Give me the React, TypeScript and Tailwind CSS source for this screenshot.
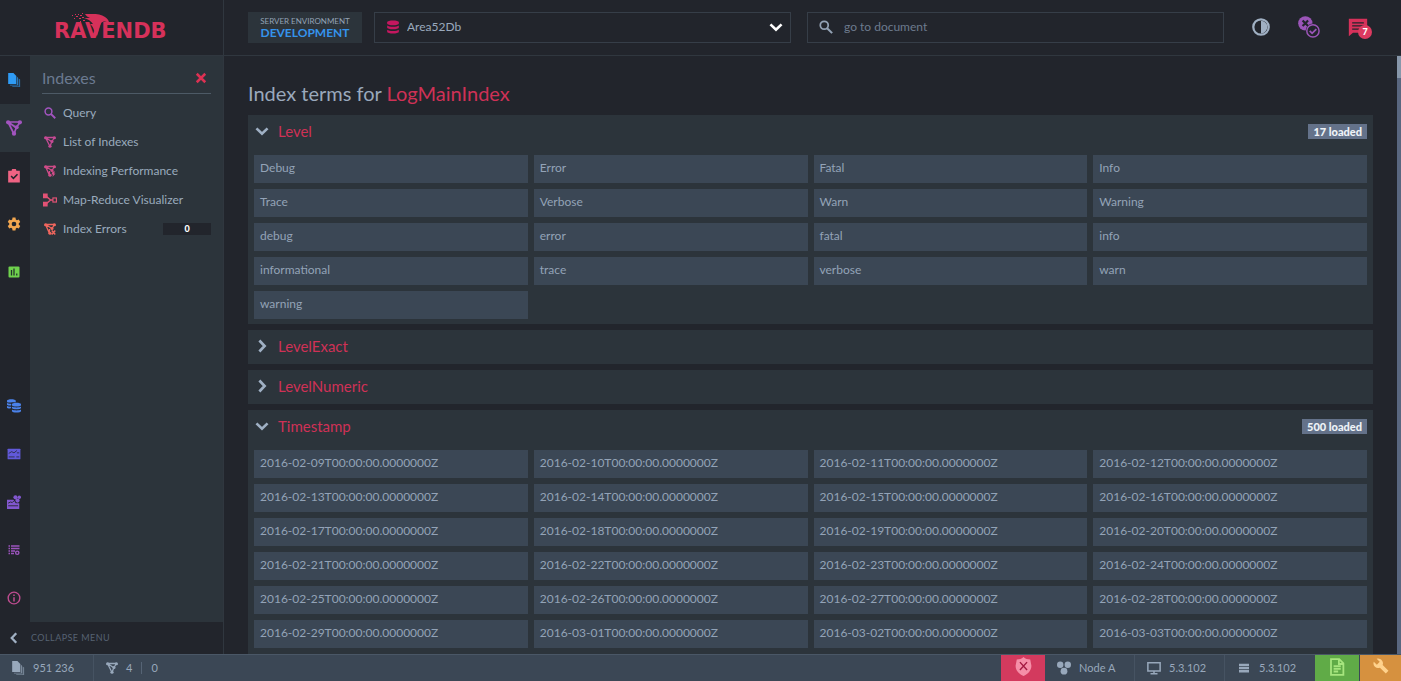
import { useState } from "react";
import type { ReactNode } from "react";

type IconProps = { className?: string };

function Svg({ className, box = 24, children }: IconProps & { box?: number; children: ReactNode }) {
  return (
    <svg viewBox={`0 0 ${box} ${box}`} className={className} fill="currentColor" aria-hidden="true">
      {children}
    </svg>
  );
}

function DocumentsIcon({ className }: IconProps) {
  return (
    <Svg className={className}>
      <path d="M2 0h9l5 5v14H2z" />
      <path d="M17 6.500 19 8v13.500H5V20h12z" opacity=".7" />
      <path d="M20 9.500 22.500 11v13H9v-1.500h11z" opacity=".6" />
    </Svg>
  );
}

function IndexIcon({ className, variant }: IconProps & { variant?: "plain" | "bolt" | "error" }) {
  return (
    <Svg className={className}>
      <path
        d={
          variant === "bolt" || variant === "error"
            ? "M3 3h18M3 3l8 18M3 3l13 8M21 3l-5 8M11 21v-9"
            : "M3 3h18M3 3l9 18M3 3l12.500 8.500L12 21M15.500 11.500 21 3"
        }
        fill="none"
        stroke="currentColor"
        strokeWidth="2.600"
      />
      <circle cx="3.200" cy="3.500" r="3.200" />
      <circle cx="20.800" cy="3.500" r="3.200" />
      <circle cx="16" cy="11" r="3" />
      <circle cx="12" cy="20.500" r="3.200" />
      {variant === "bolt" && <path d="M17 13h5l-2 4h3l-6 7 1-5h-3z" />}
      {variant === "error" && (
        <path d="m15.500 15 7 8m0-8-7 8" fill="none" stroke="currentColor" strokeWidth="3" />
      )}
    </Svg>
  );
}

function TasksIcon({ className }: IconProps) {
  return (
    <Svg className={className}>
      <path d="M2 3h6a4 4 0 0 1 8 0h6v20H2z" />
      <path d="m7 12 4 4 7-7" fill="none" stroke="#22252c" strokeWidth="2.600" />
    </Svg>
  );
}

function GearIcon({ className }: IconProps) {
  return (
    <Svg className={className}>
      <path
        fillRule="evenodd"
        d="M9.500 1h5l.6 3.200 2 1.200 3.100-1.100 2.500 4.300-2.500 2.200v2.400l2.500 2.200-2.500 4.300-3.100-1.100-2 1.200-.6 3.200h-5l-.6-3.200-2-1.200-3.100 1.100-2.500-4.300 2.500-2.200v-2.400L1.300 8.600l2.500-4.300 3.100 1.100 2-1.200zM12 8a4 4 0 1 0 0 8 4 4 0 0 0 0-8z"
      />
    </Svg>
  );
}

function StatsIcon({ className }: IconProps) {
  return (
    <Svg className={className}>
      <rect x="1" y="1" width="22" height="22" rx="2" />
      <path d="M7 8v11M12 5v14M17.500 15v4" stroke="#22352c" strokeWidth="2.600" />
    </Svg>
  );
}

function DatabaseIcon({ className }: IconProps) {
  return (
    <Svg className={className}>
      <path d="M2 4c0-4 20-4 20 0v2c0 4-20 4-20 0z" />
      <path d="M2 9.500c3 3 17 3 20 0V13c0 4-20 4-20 0z" />
      <path d="M2 16.500c3 3 17 3 20 0V20c0 4-20 4-20 0z" />
    </Svg>
  );
}

function DatabasesIcon({ className }: IconProps) {
  return (
    <Svg className={className}>
      <path d="M0 3c0-3.500 15-3.500 15 0v2.500H9C6 6 1 7 0 4.500z" />
      <path d="M0 7c2 1.500 5 1.500 7 1.200V11c-3 .6-7 0-7-1.500zM0 12c2 1.500 5 1.500 7 1.200V16c-3 .6-7 0-7-1.500z" />
      <path d="M8.500 9c0-3.500 15.500-3.500 15.500 0v1.500c0 3-15.500 3-15.500 0z" />
      <path d="M8.500 13c3 2 12.500 2 15.500 0v2.500c0 3-15.500 3-15.500 0zM8.500 18c3 2 12.500 2 15.500 0v2.500c0 3.500-15.500 3.500-15.500 0z" />
    </Svg>
  );
}

function DashboardIcon({ className }: IconProps) {
  return (
    <Svg className={className}>
      <rect x="1" y="3" width="22" height="18" rx="1" />
      <path d="m3 11 5-3 4 2 5-4M3 17h10M16 17h5M17 10h4" fill="none" stroke="#22252c" strokeWidth="1.300" />
    </Svg>
  );
}

function ClusterDashboardIcon({ className }: IconProps) {
  return (
    <Svg className={className}>
      <path d="M0 8h11l4 6h6v10H0z" />
      <circle cx="14.500" cy="4" r="3.500" />
      <circle cx="21" cy="4" r="3" />
      <circle cx="18" cy="9.500" r="3.600" />
      <path d="m2 14 4-2 3 1 3-3M2 18.500h17" fill="none" stroke="#22252c" strokeWidth="1.500" />
    </Svg>
  );
}

function LogsIcon({ className }: IconProps) {
  return (
    <Svg className={className}>
      <path
        d="M1 4h3M6 4h17M1 9h3M6 9h17M1 14h3M6 14h8M1 19h3M6 19h6"
        fill="none"
        stroke="currentColor"
        strokeWidth="3"
      />
      <circle cx="18.500" cy="17.500" r="3.300" fill="none" stroke="currentColor" strokeWidth="2.800" />
    </Svg>
  );
}

function AboutIcon({ className }: IconProps) {
  return (
    <Svg className={className}>
      <circle cx="12" cy="12" r="10" fill="none" stroke="currentColor" strokeWidth="2.400" />
      <path d="M10.700 10.500h2.600V18h-2.600zM10.700 6h2.600v2.600h-2.600z" />
    </Svg>
  );
}

function SearchIcon({ className }: IconProps) {
  return (
    <Svg className={className}>
      <circle cx="9" cy="9" r="6.800" fill="none" stroke="currentColor" strokeWidth="3" />
      <path d="m14 14 8.500 8.500" stroke="currentColor" strokeWidth="3.600" />
    </Svg>
  );
}

function MapReduceIcon({ className }: IconProps) {
  return (
    <Svg className={className}>
      <path d="M0 1h8v8H0zM0 15h8v8H0z" />
      <path d="m6 6 7 6-7 6M13 12h4" fill="none" stroke="currentColor" strokeWidth="2.400" />
      <rect x="17" y="8.500" width="6" height="7" fill="none" stroke="currentColor" strokeWidth="2" />
    </Svg>
  );
}

function CloseIcon({ className }: IconProps) {
  return (
    <Svg className={className}>
      <path d="m3.500 3.500 17 17m0-17-17 17" stroke="currentColor" strokeWidth="5" />
    </Svg>
  );
}

function ChevronIcon({ className }: IconProps) {
  return (
    <Svg className={className}>
      <path d="m2.500 7.500 9.500 9 9.500-9" fill="none" stroke="currentColor" strokeWidth="4.600" />
    </Svg>
  );
}

function ContrastIcon({ className }: IconProps) {
  return (
    <Svg className={className}>
      <circle cx="12" cy="12" r="10.300" fill="none" stroke="currentColor" strokeWidth="3" />
      <path d="M12 3.500a8.500 8.500 0 0 1 0 17z" />
    </Svg>
  );
}

function ClientsIcon({ className }: IconProps) {
  return (
    <Svg className={className}>
      <circle cx="8" cy="8" r="7.800" />
      <path d="m5 5 6 6m0-6-6 6" stroke="#22252c" strokeWidth="2.400" />
      <circle cx="16.300" cy="16.300" r="8" fill="#22252c" />
      <circle cx="16.300" cy="16.300" r="6.700" fill="none" stroke="currentColor" strokeWidth="1.600" />
      <path d="m12.800 16.300 2.600 2.600 4.600-4.600" fill="none" stroke="currentColor" strokeWidth="2" />
    </Svg>
  );
}

function MessageIcon({ className }: IconProps) {
  return (
    <Svg className={className}>
      <path d="M1 2h22v17H6l-5 4z" />
      <path d="M5 7h14M5 10.700h14M5 14.400h10" stroke="#22252c" strokeWidth="1.500" />
    </Svg>
  );
}

function ShieldIcon({ className }: IconProps) {
  return (
    <Svg className={className}>
      <path d="M12 0c2.500 2.500 5 3 8.500 3L22 11c0 6-4.500 10.500-10 13C6.500 21.500 2 17 2 11l1.500-8C7 3 9.500 2.500 12 0z" />
      <path d="m7.500 6.500 9 10m0-10-9 10" stroke="#a31b42" strokeWidth="1.800" />
    </Svg>
  );
}

function NodeIcon({ className }: IconProps) {
  return (
    <Svg className={className}>
      <circle cx="5.500" cy="6.500" r="5.500" />
      <circle cx="18.500" cy="6.500" r="5.500" />
      <circle cx="12" cy="17.500" r="5.800" />
    </Svg>
  );
}

function ClientIcon({ className }: IconProps) {
  return (
    <Svg className={className}>
      <path d="M1.500 3h21v14h-21zM12 17v5M6 22h12" fill="none" stroke="currentColor" strokeWidth="2.600" />
    </Svg>
  );
}

function ServerIcon({ className }: IconProps) {
  return (
    <Svg className={className}>
      <path d="M0 2h24v5.500H0zM0 9.500h24V15H0zM0 17h24v5.500H0z" />
    </Svg>
  );
}

function LicenseIcon({ className }: IconProps) {
  return (
    <Svg className={className}>
      <path
        d="M4 1.500h11l5.500 5.500v15.500H4zM14.500 1.500V8h6M7.500 11h9.500M7.500 14.500h9.500M7.500 18h6"
        fill="none"
        stroke="currentColor"
        strokeWidth="2.400"
      />
    </Svg>
  );
}

function WrenchIcon({ className }: IconProps) {
  return (
    <Svg className={className}>
      <path d="M9.500 1.200a7 7 0 0 1 5 9.300l8.700 8.700-4 4-8.800-8.700A7 7 0 0 1 1.200 5.500l4.600 4.600 4.300-4.300L5.500 1.200a7 7 0 0 1 4 0z" />
    </Svg>
  );
}

function Logo() {
  return (
    <svg viewBox="0 0 116 32" className="h-8 w-29 text-[#d6315a]" role="img" aria-label="RavenDB">
      <path
        fill="currentColor"
        d="M31 4c7 0 15-1 20 3 3 2 4 4 4 6-3-2-6-2-8 0-2 3-2 8-4 13-3-4-3-9-7-12h3c-2-3-5-5-9-6h6c-2-1-4-2-5-4z"
      />
      <path
        fill="currentColor"
        d="M18 5h1v1h-1zM21 4h1v1h-1zM24 4h1v1h-1zM22 6h2v1h-2zM26 5h2v1h-2zM25 8h2v1h-2zM28 7h2v1h-2zM20 8h1v1h-1zM29 10h2v1h-2zM26 11h1v1h-1zM32 12h1v1h-1zM28 3h1v1h-1z"
      />
      <text x="0" y="28" fill="currentColor" className="font-['DejaVu_Sans'] text-[21px] font-bold">
        RAVENDB
      </text>
    </svg>
  );
}

const topModules = [
  { label: "Documents", color: "text-[#2f9bf5]", active: false, icon: <DocumentsIcon className="size-3.5" /> },
  { label: "Indexes", color: "text-[#a254bf]", active: true, icon: <IndexIcon className="size-4" /> },
  { label: "Tasks", color: "text-[#ef6383]", active: false, icon: <TasksIcon className="size-3.5" /> },
  { label: "Settings", color: "text-[#f2a64f]", active: false, icon: <GearIcon className="size-3.5" /> },
  { label: "Stats", color: "text-[#6fd14d]", active: false, icon: <StatsIcon className="size-3" /> },
];

const bottomModules = [
  { label: "Databases", color: "text-[#4b82ea]", icon: <DatabasesIcon className="size-3.5" /> },
  { label: "Server Dashboard", color: "text-[#6159d9]", icon: <DashboardIcon className="size-3.5" /> },
  { label: "Cluster Dashboard", color: "text-[#8257cf]", icon: <ClusterDashboardIcon className="size-3.5" /> },
  { label: "Manage Server", color: "text-[#9c54bd]", icon: <LogsIcon className="size-3" /> },
  { label: "About", color: "text-[#bd4c8f]", icon: <AboutIcon className="size-3.5" /> },
];

const menu = [
  { label: "Query", color: "text-[#a254bf]", icon: <SearchIcon className="size-3" /> },
  { label: "List of Indexes", color: "text-[#c64a95]", icon: <IndexIcon className="size-3" /> },
  { label: "Indexing Performance", color: "text-[#cf4c88]", icon: <IndexIcon variant="bolt" className="size-3" /> },
  { label: "Map-Reduce Visualizer", color: "text-[#e25275]", icon: <MapReduceIcon className="size-3.5" /> },
  { label: "Index Errors", color: "text-[#f0665e]", icon: <IndexIcon variant="error" className="size-3" />, badge: "0" },
];

const levels = [
  "Debug", "Error", "Fatal", "Info",
  "Trace", "Verbose", "Warn", "Warning",
  "debug", "error", "fatal", "info",
  "informational", "trace", "verbose", "warn",
  "warning",
];

const timestamps = Array.from({ length: 28 }, (_, i) => {
  const day = new Date(Date.UTC(2016, 1, 9 + i));
  return `${day.toISOString().slice(0, 10)}T00:00:00.0000000Z`;
});

const fields = [
  { name: "Level", terms: levels, loaded: "17 loaded", open: true },
  { name: "LevelExact", terms: [], loaded: "", open: false },
  { name: "LevelNumeric", terms: [], loaded: "", open: false },
  { name: "Timestamp", terms: timestamps, loaded: "500 loaded", open: true },
];

function TermsPanel({ name, terms, loaded, open: initial }: (typeof fields)[number]) {
  const [open, setOpen] = useState(initial);
  return (
    <section className="bg-[#2c343b]">
      <h2>
        <button
          type="button"
          aria-expanded={open}
          onClick={() => setOpen(!open)}
          className="flex h-[34px] w-full items-center px-1.5 pb-0.5 text-left"
        >
          <ChevronIcon className={open ? "mx-px size-3.5 text-[#9fb0c4]" : "mx-px size-3.5 -rotate-90 text-[#9fb0c4]"} />
          <span className="ml-2 flex-1 text-[15px] text-[#cf3156]">{name}</span>
          {open && loaded && (
            <span className="bg-[#64728a] px-[5px] text-[11px] leading-[15px] font-black text-[#eef2f7]">{loaded}</span>
          )}
        </button>
      </h2>
      {open && (
        <ul className="grid grid-cols-4 gap-1.5 px-1.5 pt-1.5 pb-[5px]">
          {terms.map((term) => (
            <li key={term} className="h-7 truncate bg-[#3b4755] px-1.5 text-xs leading-[26px] text-[#93a3b7]">
              {term}
            </li>
          ))}
        </ul>
      )}
    </section>
  );
}

function Header() {
  return (
    <header className="flex h-14 shrink-0 border-b border-[#30373f]">
      <a href="#home" className="flex w-56 shrink-0 items-start justify-center border-r border-[#30373f] pt-2.5">
        <Logo />
      </a>
      <div className="flex h-[55px] flex-1 items-center pr-7 pl-6">
        <div className="flex h-[31px] w-[114px] shrink-0 flex-col items-center justify-center bg-[#2c343b]">
          <span className="text-[8px] leading-[9px] text-[#93a2b5]">SERVER ENVIRONMENT</span>
          <span className="text-xs leading-[13px] font-bold text-[#3593ec]">DEVELOPMENT</span>
        </div>
        <div className="relative ml-3 flex-1">
          <DatabaseIcon className="absolute top-2 left-3 size-3.5 text-[#c4175f]" />
          <select
            aria-label="Database"
            className="block h-[31px] w-full appearance-none border border-[#363e48] bg-transparent pb-0.5 pl-8 text-xs text-[#9aa9bc]"
          >
            <option>Area52Db</option>
          </select>
          <ChevronIcon className="pointer-events-none absolute top-2 right-2 size-3.5 text-white" />
        </div>
        <div className="relative ml-4 flex-1">
          <SearchIcon className="absolute top-2 left-3 size-3.5 text-[#93a2b5]" />
          <input
            type="search"
            aria-label="Go to document"
            placeholder="go to document"
            className="block h-[31px] w-full border border-[#363e48] bg-transparent pb-[3px] pl-9 text-xs text-[#9aa9bc] placeholder:text-[#6d7b8e]"
          />
        </div>
        <div className="ml-7 flex w-[121px] shrink-0 items-center justify-between pr-px pb-0.5">
          <button type="button" aria-label="Toggle theme" className="text-[#a0b0c3]">
            <ContrastIcon className="size-[18px]" />
          </button>
          <button type="button" aria-label="Clients" className="text-[#9b55b8]">
            <ClientsIcon className="size-[22px]" />
          </button>
          <button type="button" aria-label="Notifications" className="relative text-[#d6315a]">
            <MessageIcon className="mr-1 size-5" />
            <span className="absolute top-2 right-0 size-3.5 rounded-full bg-[#dc3a60] text-center text-[9px] leading-[14px] font-black text-white">
              7
            </span>
          </button>
        </div>
      </div>
    </header>
  );
}

function Sidebar() {
  return (
    <aside className="flex w-56 shrink-0 flex-col border-r border-[#30373f]">
      <div className="flex min-h-0 flex-1">
        <nav aria-label="Modules" className="flex w-[30px] shrink-0 flex-col justify-between">
          <div>
            {topModules.map((m) => (
              <a
                key={m.label}
                href="#module"
                aria-label={m.label}
                className={`flex h-12 items-center justify-center pr-0.5 ${m.color} ${m.active ? "bg-[#2c343b]" : ""}`}
              >
                {m.icon}
              </a>
            ))}
          </div>
          <div>
            {bottomModules.map((m) => (
              <a
                key={m.label}
                href="#module"
                aria-label={m.label}
                className={`flex h-12 items-center justify-center pr-0.5 ${m.color}`}
              >
                {m.icon}
              </a>
            ))}
          </div>
        </nav>
        <div className="flex-1 bg-[#2c343b] px-3">
          <div className="flex h-[38px] items-center justify-between border-b border-[#4d5a66] pt-1.5 pr-1">
            <h2 className="text-base text-[#6b7a90]">Indexes</h2>
            <button type="button" aria-label="Close" className="text-[#dd3153]">
              <CloseIcon className="size-3" />
            </button>
          </div>
          <ul className="pt-1">
            {menu.map((item) => (
              <li key={item.label}>
                <a href="#menu" className="flex h-[29px] items-center text-xs text-[#9aabbd]">
                  <span className={`flex w-4 justify-center ${item.color}`}>{item.icon}</span>
                  <span className="ml-[5px] flex-1 whitespace-nowrap">{item.label}</span>
                  {item.badge && (
                    <span className="w-12 bg-[#22252c] text-center text-[9px] leading-3 font-black text-white">
                      {item.badge}
                    </span>
                  )}
                </a>
              </li>
            ))}
          </ul>
        </div>
      </div>
      <button type="button" className="flex h-8 shrink-0 items-center pl-2 text-[9px] tracking-wider text-[#566272]">
        <ChevronIcon className="mr-[11px] size-3 rotate-90 text-[#a0b0c3]" />
        COLLAPSE MENU
      </button>
    </aside>
  );
}

function Footer() {
  return (
    <footer className="flex h-[27px] shrink-0 items-stretch border-t border-[#4a5766] bg-[#3b4755] text-[11px] text-[#98a8bb]">
      <a href="#documents" className="flex w-[94px] items-center border-r border-[#465362] pl-[11px]">
        <DocumentsIcon className="mr-2 size-3.5" />
        <span>951 236</span>
      </a>
      <a href="#indexes" className="flex items-center pl-3">
        <IndexIcon className="mr-2 size-3" />
        <span>4</span>
        <span className="mx-[9px] h-3 w-px bg-[#566475]" />
        <span>0</span>
      </a>
      <div className="flex-1" />
      <button type="button" aria-label="Security" className="flex w-11 items-start justify-center bg-[#d33a5e] pt-0.5 text-[#f58fa8]">
        <ShieldIcon className="size-[19px]" />
      </button>
      <a href="#node" className="flex w-[90px] items-center border-r border-[#465362] pl-3">
        <NodeIcon className="mr-2 size-3.5" />
        Node A
      </a>
      <a href="#client" className="flex w-[90px] items-center border-r border-[#465362] pl-3">
        <ClientIcon className="mr-2 size-3.5" />
        5.3.102
      </a>
      <a href="#server" className="flex w-[90px] items-center pl-3.5">
        <ServerIcon className="mr-2.5 size-2.5" />
        5.3.102
      </a>
      <button type="button" aria-label="License" className="flex w-11 items-start justify-center bg-[#60ab47] pt-[3px] text-[#a6e57e]">
        <LicenseIcon className="size-[18px]" />
      </button>
      <button type="button" aria-label="Tools" className="ml-px flex w-[41px] items-start justify-center bg-[#d6913f] pt-[3px] text-[#ffd28c]">
        <WrenchIcon className="size-4" />
      </button>
    </footer>
  );
}

export default function App() {
  return (
    <div className="flex h-screen flex-col overflow-hidden bg-[#22252c] font-[Lato,'Noto_Sans',sans-serif]">
      <Header />
      <div className="flex min-h-0 flex-1">
        <Sidebar />
        <main className="min-w-0 flex-1 overflow-y-auto px-6 pt-[23px] [scrollbar-width:none]">
          <h1 className="pb-2 text-xl leading-7 text-[#9aa9bc]">
            Index terms for <span className="text-[#cf3156]">LogMainIndex</span>
          </h1>
          <div className="flex flex-col gap-1.5">
            {fields.map((field) => (
              <TermsPanel key={field.name} {...field} />
            ))}
          </div>
        </main>
        <div className="w-1 shrink-0 bg-[#596780]" aria-hidden="true">
          <div className="h-[22px] bg-[#8797aa]" />
        </div>
      </div>
      <Footer />
    </div>
  );
}
